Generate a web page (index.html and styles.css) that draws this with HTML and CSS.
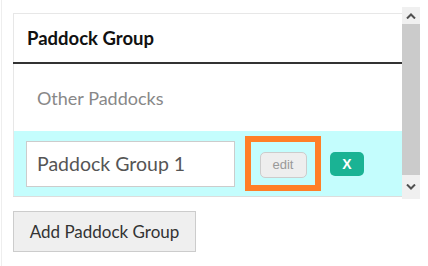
FILE: index.html
```html
<!DOCTYPE html>
<html lang="en">
<head>
    <meta charset="UTF-8">
    <meta name="viewport" content="width=device-width, initial-scale=1.0">
    <title>Paddock Groups</title>
    <link rel="stylesheet" href="styles.css">
</head>
<body>
    <div class="page">
        <div class="scroller">
            <div class="list">
                <table class="groups">
                    <thead>
                        <tr><th colspan="3">Paddock Group</th></tr>
                    </thead>
                    <tbody>
                        <tr class="other-row">
                            <td colspan="3">Other Paddocks</td>
                        </tr>
                        <tr class="group-row">
                            <td class="name-cell"><input type="text" class="group-name" value="Paddock Group 1"></td>
                            <td class="edit-cell"><span class="highlight"><button class="edit-btn">edit</button></span></td>
                            <td class="remove-cell"><button class="remove-btn">X</button></td>
                        </tr>
                    </tbody>
                </table>
            </div>
            <div class="scrollbar">
                <div class="sb-btn">
                    <svg width="10" height="6" viewBox="0 0 10 6"><path d="M1 5.5 L5 1.5 L9 5.5" fill="none" stroke="#505050" stroke-width="2"/></svg>
                </div>
                <div class="sb-thumb"></div>
                <div class="sb-btn">
                    <svg width="10" height="6" viewBox="0 0 10 6"><path d="M1 0.5 L5 4.5 L9 0.5" fill="none" stroke="#505050" stroke-width="2"/></svg>
                </div>
            </div>
        </div>
        <button class="add-btn">Add Paddock Group</button>
    </div>
</body>
</html>
```

FILE: styles.css
```css
body {
    margin: 0;
    font-family: Lato, 'Open Sans', sans-serif;
    background: white;
}

.page {
    margin-left: 1px;
    border-left: 1px solid #eeeeee;
    padding: 7px 8px 0 11px;
    min-height: 100vh;
    box-sizing: border-box;
}

.scroller {
    display: flex;
    height: 192px;
}

.list {
    flex: 1;
    padding-top: 6px;
    overflow: hidden;
}

.groups {
    width: 100%;
    border-collapse: collapse;
    border-top: 1px solid #e7e7e7;
    border-left: 1px solid #e7e7e7;
}

.groups th {
    height: 48px;
    padding: 0 0 0 13px;
    text-align: left;
    font-size: 18.5px;
    font-weight: bold;
    color: #111;
    border-bottom: 2px solid #333;
}

.other-row td {
    height: 67px;
    padding: 0 0 0 23px;
    font-size: 18px;
    color: #888;
}

.group-row td {
    background: #c4fdfd;
    height: 65px;
    border-bottom: 1px solid #dddddd;
    padding: 0;
}

.name-cell {
    padding-left: 12px !important;
    width: 210px;
}

.group-name {
    width: 209px;
    height: 46px;
    box-sizing: border-box;
    border: 1px solid #cccccc;
    padding: 0 10px;
    font-family: Lato, 'Open Sans', sans-serif;
    font-size: 19.5px;
    color: #555;
    background: white;
    display: block;
}

.edit-cell {
    width: 85px;
    padding-left: 9px !important;
}

.highlight {
    display: flex;
    width: 64px;
    height: 43px;
    border: 6px solid #ff7f27;
    align-items: center;
    justify-content: center;
}

.edit-btn {
    width: 47px;
    height: 26px;
    background: #eeeeee;
    border: 1px solid #cccccc;
    border-radius: 5px;
    font-family: 'Liberation Sans', Arial, sans-serif;
    font-size: 13px;
    color: #999;
    padding: 0;
    margin-top: 2px;
}

.remove-cell {
    padding-left: 0 !important;
}

.remove-btn {
    width: 34px;
    height: 24px;
    background: #1ab394;
    border: none;
    border-radius: 5px;
    font-family: 'Liberation Sans', Arial, sans-serif;
    font-size: 14px;
    font-weight: bold;
    color: white;
    padding: 0;
    display: block;
}

.scrollbar {
    width: 18px;
    display: flex;
    flex-direction: column;
}

.sb-btn {
    height: 17px;
    background: #f0f0f0;
    display: flex;
    align-items: center;
    justify-content: center;
}

.sb-btn:last-child {
    height: 24px;
}

.sb-thumb {
    flex: 1;
    background: #cbcbcb;
}

.add-btn {
    margin-top: 12px;
    width: 183px;
    height: 41px;
    background: #efefef;
    border: 1px solid #cccccc;
    font-family: Lato, 'Open Sans', sans-serif;
    font-size: 17px;
    color: #333;
    padding: 0;
    border-radius: 0;
}
```
